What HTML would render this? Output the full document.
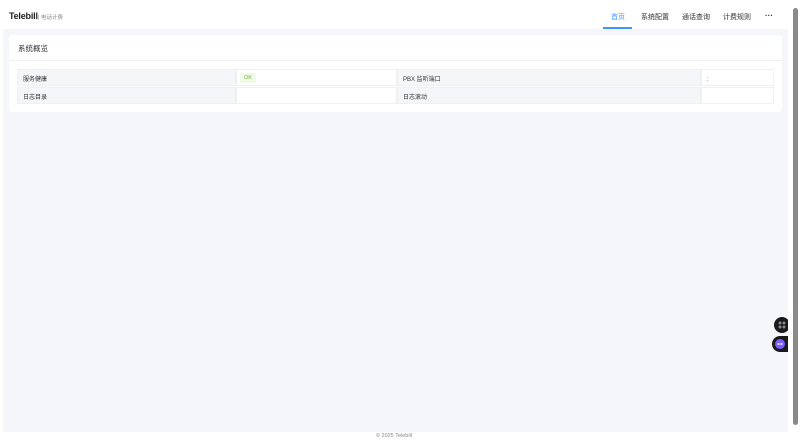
<!DOCTYPE html>
<html><head><meta charset="utf-8"><style>
*{margin:0;padding:0;box-sizing:border-box}
body{width:800px;height:448px;overflow:hidden;background:#fff;font-family:"Liberation Sans","Noto Sans CJK SC",sans-serif;position:relative}
.hdr{position:absolute;left:0;top:0;width:788px;height:29px;background:#fff}
.logo{position:absolute;left:9px;top:11px;font-size:9px;font-weight:bold;color:#1f1f1f;letter-spacing:-0.2px}
.sub{position:absolute;left:38px;top:13px;font-size:5.5px;color:#888}
.nav{position:absolute;top:12px;font-size:7px;color:#333}
.ul{position:absolute;left:603px;top:27px;width:29px;height:2px;background:#4096ff}
.main{position:absolute;left:3px;top:29px;width:785px;height:403px;background:#f5f6fa}
.card{position:absolute;left:9px;top:35px;width:773px;height:77px;background:#fff;border-radius:3px}
.title{position:absolute;left:18px;top:43px;font-size:7.5px;color:#333}
.div{position:absolute;left:9px;top:60px;width:773px;height:1px;background:#f0f0f0}
.cell{position:absolute;height:17px;font-size:6px;color:#333;padding:6.5px 0 0 5px;border:0.5px solid #f0f0f0;line-height:7px}
.lab{background:#f5f6fa}
.ok{position:absolute;left:240px;top:73px;width:16px;height:10px;background:#f0fae6;color:#6cbf3a;font-size:5.5px;text-align:center;line-height:10px;border-radius:2px}
.foot{position:absolute;top:433px;left:0;width:788px;text-align:center;font-size:5.5px;color:#888}
.sb{position:absolute;left:788px;top:0;width:12px;height:448px;background:#fff}
.th{position:absolute;left:793px;top:8px;width:5px;height:417px;background:#8a8a8a;border-radius:3px}
.b1{position:absolute;left:774px;top:317px;width:16px;height:16px;border-radius:50%;background:#1a1a1a}
.b2{position:absolute;left:772px;top:336px;width:22px;height:16px;border-radius:8px 0 0 8px;background:#1a1a1a}
</style></head><body>
<div class="hdr"></div>
<div class="logo">Telebill</div><div class="sub">| 电话计费</div>
<div class="nav" style="left:611px;color:#4096ff">首页</div>
<div class="nav" style="left:641px">系统配置</div>
<div class="nav" style="left:682px">通话查询</div>
<div class="nav" style="left:723px">计费规则</div>
<div class="nav" style="left:765px;top:11px;font-weight:bold;font-size:8px">···</div>
<div class="ul"></div>
<div class="main"></div>
<div class="card"></div>
<div class="title">系统概览</div>
<div class="div"></div>
<div class="cell lab" style="left:17px;top:69px;width:219px">服务健康</div>
<div class="cell" style="left:236px;top:69px;width:161px"></div>
<div class="cell lab" style="left:397px;top:69px;width:304px">PBX 监听端口</div>
<div class="cell" style="left:701px;top:69px;width:73px">:</div>
<div class="cell lab" style="left:17px;top:87px;width:219px">日志目录</div>
<div class="cell" style="left:236px;top:87px;width:161px"></div>
<div class="cell lab" style="left:397px;top:87px;width:304px">日志滚动</div>
<div class="cell" style="left:701px;top:87px;width:73px"></div>
<div class="ok">OK</div>
<div class="foot">© 2025 Telebill</div>
<div class="b1"><svg width="16" height="16"><g fill="#888"><circle cx="6" cy="6" r="1.5"/><circle cx="10" cy="6" r="1.5"/><circle cx="6" cy="10" r="1.5"/><circle cx="10" cy="10" r="1.5"/></g></svg></div>
<div class="b2"><svg width="22" height="16"><circle cx="8" cy="8" r="5" fill="#7a5cff"/><circle cx="6.5" cy="8" r="1" fill="#fff"/><circle cx="9.5" cy="8" r="1" fill="#fff"/></svg></div>
<div class="sb"></div><div class="th"></div>
</body></html>
